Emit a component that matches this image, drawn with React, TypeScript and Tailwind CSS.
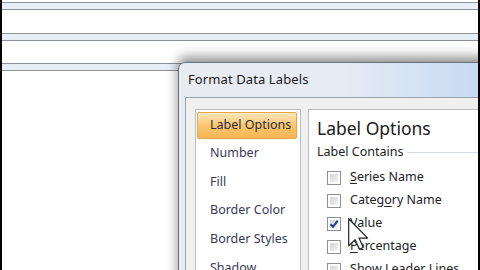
import React from "react";

const font = { fontFamily: '"Noto Sans", "Open Sans", sans-serif' };

function Band() {
  return (
    <div className="flex flex-col">
      <div className="h-px bg-[#8b9097]" />
      <div className="h-[6px] bg-[#e8eef6]" />
      <div className="h-px bg-[#8b9097]" />
    </div>
  );
}

function Checkbox({ checked }: { checked?: boolean }) {
  return (
    <div className="w-[14px] h-[14px] border border-[#8e8f8f] bg-white p-[2px] shrink-0">
      <div className="w-full h-full bg-gradient-to-br from-[#d2d4d6] to-[#f4f4f4] relative">
        {checked && (
          <svg viewBox="0 0 12 12" className="absolute -left-[2px] -top-[2px] w-[12px] h-[12px]">
            <path d="M2.5 6.2 L5 8.8 L9.8 2.6" fill="none" stroke="#1d3f8f" strokeWidth="2" />
          </svg>
        )}
      </div>
    </div>
  );
}

function CheckRow({ label, u, checked }: { label: string; u: number; checked?: boolean }) {
  return (
    <div className="flex items-center h-[23px] gap-[9px]">
      <Checkbox checked={checked} />
      <span className="text-[12.5px] text-[#222]">
        {label.slice(0, u)}
        <span className="underline underline-offset-2">{label[u]}</span>
        {label.slice(u + 1)}
      </span>
    </div>
  );
}

const items = ["Number", "Fill", "Border Color", "Border Styles", "Shadow"];

export default function App() {
  return (
    <div className="w-[480px] h-[270px] bg-black px-[2px]" style={font}>
      <div className="relative w-full h-full bg-white overflow-hidden">
        <div className="flex flex-col">
          <div className="h-[2px]" />
          <Band />
          <div className="h-[23px]" />
          <Band />
          <div className="h-[22px]" />
          <Band />
        </div>

        {/* dialog window */}
        <div className="absolute left-[176px] top-[62px] w-[320px] h-[230px] rounded-tl-[7px] border border-[#66717e] bg-gradient-to-r from-[#e9ecf0] via-[#e6ecf4] to-[#c3d8f2] shadow-[0_-5px_12px_rgba(0,0,0,0.45)] flex flex-col">
          <div className="h-[34px] shrink-0 pl-[9px] flex items-center text-[13px] text-[#1a1a1a] tracking-[0.1px]">
            Format Data Labels
          </div>
          <div className="ml-[6px] flex-1 border-l border-t border-[#98a3b0] bg-[#f0f0f0] flex pl-[9px] pt-[11px] gap-[7px]">
            <div className="w-[106px] shrink-0 border border-[#bdbdbd] bg-white pt-[2px] pl-[1px] pr-[3px]">
              <div className="h-[27px] rounded-[2px] border border-[#e3a649] bg-gradient-to-b from-[#fde7bb] via-[#f9c56e] to-[#f7b552] flex items-center pl-[12px] text-[12.5px] text-[#2d2d3c]">
                Label Options
              </div>
              {items.map((t) => (
                <div key={t} className="h-[28.7px] flex items-center pl-[13px] text-[12.5px] text-[#3a3a55]">
                  {t}
                </div>
              ))}
            </div>
            <div className="flex-1 border border-[#bdbdbd] bg-white pl-[8px] pt-[4px]">
              <div className="text-[17.5px] leading-[28px] text-[#202020]">Label Options</div>
              <div className="flex items-center gap-[4px] mt-[2px]">
                <span className="text-[12.5px] text-[#222] leading-[16px]">Label Contains</span>
                <div className="flex-1 h-px bg-[#d3dce3]" />
              </div>
              <div className="flex flex-col pl-[10px] mt-[6px]">
                <CheckRow label="Series Name" u={0} />
                <CheckRow label="Category Name" u={5} />
                <CheckRow label="Value" u={0} checked />
                <CheckRow label="Percentage" u={0} />
                <CheckRow label="Show Leader Lines" u={1} />
              </div>
            </div>
          </div>
        </div>

        {/* mouse cursor */}
        <svg className="absolute left-[345px] top-[217px]" width="22" height="34" viewBox="0 0 13 20">
          <path d="M1 1 L1 17 L4.8 13.3 L7.3 19 L9.6 18 L7.1 12.4 L12.2 12.4 Z" fill="white" stroke="#222" strokeWidth="0.7" strokeLinejoin="round" />
        </svg>
      </div>
    </div>
  );
}
